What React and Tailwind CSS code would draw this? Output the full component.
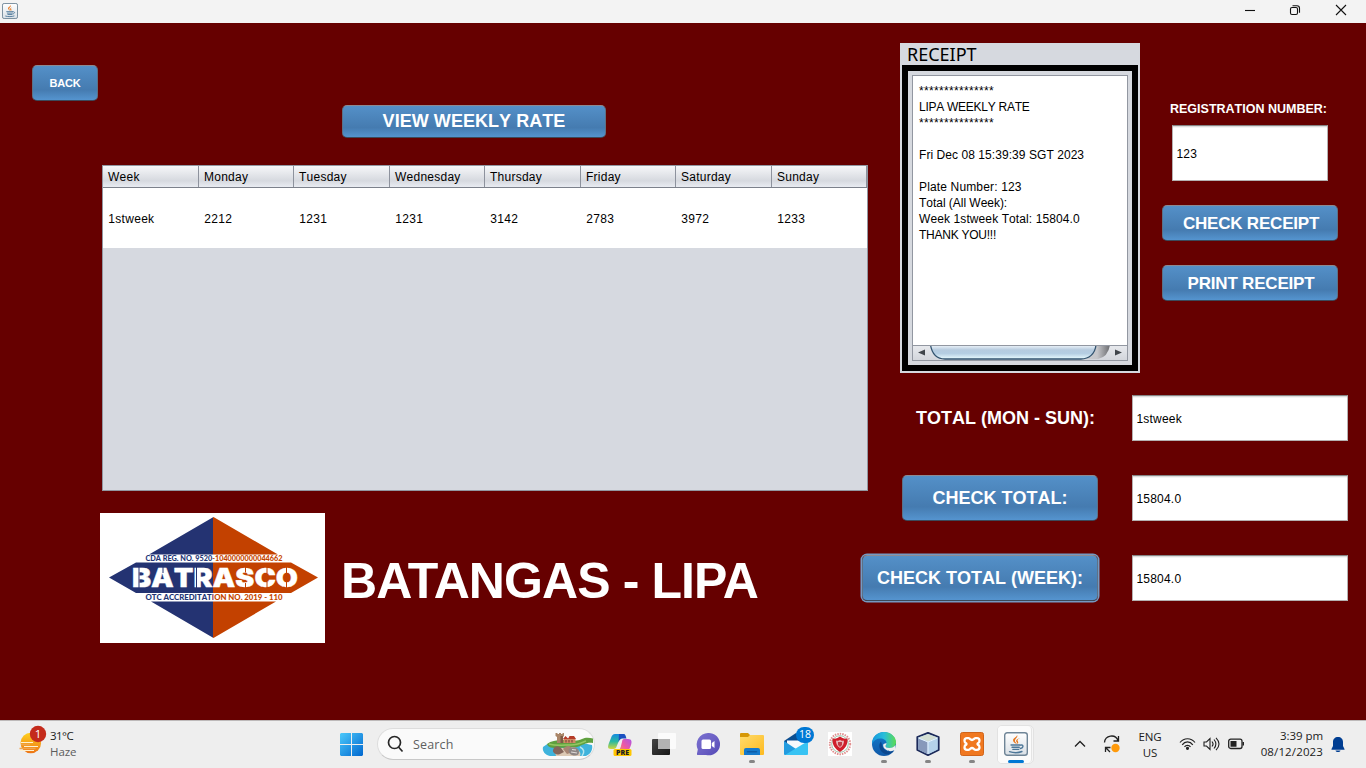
import React from "react";

const days = ["Week", "Monday", "Tuesday", "Wednesday", "Thursday", "Friday", "Saturday", "Sunday"];
const row = ["1stweek", "2212", "1231", "1231", "3142", "2783", "3972", "1233"];
const colWidths = ["w-[96px]", "w-[95px]", "w-[96px]", "w-[95px]", "w-[96px]", "w-[95px]", "w-[96px]", "w-[95px]"];

const receipt = [
  ["***************", "tracking-[0.330px]"],
  ["LIPA WEEKLY RATE", "tracking-[-0.260px]"],
  ["***************", "tracking-[0.330px]"],
  ["", ""],
  ["Fri Dec 08 15:39:39 SGT 2023", "tracking-[0.060px]"],
  ["", ""],
  ["Plate Number: 123", "tracking-[0.150px]"],
  ["Total (All Week):", "tracking-[-0.030px]"],
  ["Week 1stweek Total: 15804.0", "tracking-[0.100px]"],
  ["THANK YOU!!!", "tracking-[-0.250px]"],
];

function JButton({ children, className }) {
  return (
    <button
      className={
        "flex shrink-0 items-center justify-center rounded-[5px] border border-[#5d7186] border-t-[#8c8a92] border-b-[#3b4a5a] bg-linear-to-b from-[#5490c8] via-[#457bb0] via-70% to-[#5594cf] font-bold whitespace-nowrap text-white " +
        className
      }
    >
      {children}
    </button>
  );
}

function Field({ value, className }) {
  return (
    <div
      className={
        "flex shrink-0 items-center border border-[#b5b1b1] border-t-[#858585] bg-white pt-[2px] pl-[3.500px] text-[12px] text-black shadow-[inset_0_1px_0_#dcdcdc,inset_0_2px_0_#f4f4f4] " +
        className
      }
    >
      <span className="tracking-[0.200px]">{value}</span>
    </div>
  );
}

function JavaIcon({ size }) {
  return (
    <svg width={size} height={size} viewBox="0 0 24 24" className="shrink-0">
      <defs>
        <linearGradient id="jv" x1="0" y1="0" x2="0" y2="1">
          <stop offset="0" stopColor="#ffffff" />
          <stop offset="1" stopColor="#d9e0e6" />
        </linearGradient>
      </defs>
      <rect x="0.7" y="0.7" width="22.6" height="22.6" rx="2.5" fill="url(#jv)" stroke="#6f8597" strokeWidth="1.400" />
      <path d="M13 3c1.800 2.800-3.800 4.200-1.600 7 .5.7 1.200 1 1.200 2-2-1-4.300-2.600-3.300-4.700C10.100 5.600 13 4.900 13 3z" fill="#e8761c" />
      <path d="M16 6.200c-1.500.6-3 1.300-2.300 2.800.5.9 1 1.900-.3 3 .3-1.500-1.700-2-1.200-3.500.4-1.400 2.400-2.200 3.800-2.300z" fill="#e8761c" />
      <path d="M7 13h9M8 15.200h7.300M8.800 17.300h6M5.500 19.700c3.500 1.100 9.500 1 12.500-.2M16.300 13.200c3.700-1 3.400 2.800 0 3.300" fill="none" stroke="#4d7798" strokeWidth="1.350" strokeLinecap="round" />
    </svg>
  );
}

function Logo() {
  return (
    <svg width="225" height="130" viewBox="0 0 225 130" className="shrink-0 bg-white">
      <defs>
        <linearGradient id="split" gradientUnits="userSpaceOnUse" x1="0" y1="0" x2="225" y2="0">
          <stop offset="0.5044" stopColor="#243372" />
          <stop offset="0.5044" stopColor="#c34100" />
        </linearGradient>
      </defs>
      <path d="M113.500 4 L49 41.500 H178z M36 49.500 H191 L218 64.500 L191 80 H36 L9 64.500z M51 88.500 H176 L113.500 125z" fill="url(#split)" />
      <g fill="url(#split)" fontFamily="Lato, sans-serif" fontWeight="900">
        <text x="45.500" y="48.400" fontSize="7.300" textLength="137" lengthAdjust="spacingAndGlyphs">CDA REG. NO. 9520-1040000000044662</text>
        <text x="45.500" y="86.700" fontSize="7.300" textLength="137" lengthAdjust="spacingAndGlyphs">OTC ACCREDITATION NO. 2019 - 110</text>
      </g>
      <text x="32" y="74" fill="#fff" stroke="#fff" strokeWidth="0.400" fontFamily="Inter, sans-serif" fontWeight="900" fontSize="26" textLength="166" lengthAdjust="spacingAndGlyphs">BATRASCO</text>
      <g strokeWidth="1">
        <path d="M39 54v22M63 54v6M96.500 54v22" stroke="#243372" />
        <path d="M145.500 54v5.500M145.500 70v6M167 54v6M167 69v7M186.500 54v6M186.500 69v7" stroke="#c34100" />
      </g>
    </svg>
  );
}

function SearchArt() {
  return (
    <svg width="52" height="26" viewBox="0 0 52 26" className="shrink-0">
      <path d="M1 16C6 12 10 11 16 11c12-1 26 1 34 3 1 4-1 9-6 11H8C3 24 0 20 1 16z" fill="#3fb3dc" />
      <path d="M5 13c4-3 9-4 15-4 10 0 14 2 20-1 4-2 8-1 11-.5V12c-7-1-9 2-16 4-8 2-13 0-19 1-5 0-10 0-11-4z" fill="#5fa03f" />
      <path d="M7 13c7 2 15 1 22 1 6 0 10-2 15-4" fill="none" stroke="#94c763" strokeWidth="1.500" />
      <path d="M12 17h12l8-1c4 2 8 6 6 9H14z" fill="#dcc9b4" />
      <path d="M13.500 2h2v1h1.500V2h2v1h1.500V2h1.500v3l-1 1v6h-6V6l-1.500-1z" fill="#a98568" />
      <path d="M18.500 5h2.500v7h-2.500z" fill="#7d5b45" />
      <path d="M21.500 7.500h12V12h-12z" fill="#d08a66" />
      <path d="M21 8l2.500-3 3 3zM26 8l1.500-3H32l2 3z" fill="#b53b28" />
      <path d="M24 9v2.500M27 9v2.500M30 9v2.500" stroke="#703c31" strokeWidth="1" />
      <path d="M11 19c1-4 5-5 8-2l3 4-5 2.500c-4 0-6.500-2-6-4.500z" fill="#84655a" />
      <path d="M21 18c2-3 6-4 8-2l2 5-6 2z" fill="#a78572" />
      <path d="M28 17c4-2 9 0 9 4s-4 4-7 3-5-5-2-7z" fill="#8d8583" />
      <path d="M30 18.500l4 .5M29 21l6 1" stroke="#dedad8" strokeWidth="1.200" />
      <path d="M38 16c4 2 5 5 2 9" fill="none" stroke="#b7e6ef" strokeWidth="1.500" />
    </svg>
  );
}

function TaskSlot({ children, indicator }) {
  return (
    <div className="flex h-[48px] w-[44px] shrink-0 flex-col items-center pt-[11px]">
      {children}
      {indicator && <span className="mt-[4px] h-[3px] w-[6px] rounded-full bg-[#858585]" />}
    </div>
  );
}

function Taskbar() {
  return (
    <footer className="flex h-[48px] w-full shrink-0 border-t border-[#bdb9b9] bg-[#eeeeee] font-['Open_Sans',sans-serif] text-[#1b1b1b]">
      <div className="flex w-[331px] shrink-0 items-start pl-[16px]">
        <svg width="31" height="34" viewBox="0 0 31 34" className="mt-[3px] shrink-0">
          <defs>
            <linearGradient id="sun" x1="0" y1="0" x2="0" y2="1"><stop stopColor="#ffd21d" /><stop offset="1" stopColor="#ed7415" /></linearGradient>
          </defs>
          <circle cx="14.800" cy="19" r="10.300" fill="url(#sun)" />
          <path d="M5 18.500h12M8 22.500h14M4 26.500h14" stroke="#fff0d0" strokeWidth="1.200" />
          <path d="M5 20.500h9M3.500 24.500h16" stroke="#efa552" strokeWidth="1.400" />
          <circle cx="22" cy="10" r="8.200" fill="#c42b1c" />
          <text x="22" y="14" textAnchor="middle" fill="#fff" fontSize="11.500" fontFamily="Open Sans, sans-serif">1</text>
        </svg>
        <div className="ml-[3px] flex flex-col pt-[7px] text-[11.500px] leading-[16px]">
          <span className="tracking-[-0.550px]">31°C</span>
          <span className="tracking-[-0.050px] text-[#5c5c5c]">Haze</span>
        </div>
      </div>
      <div className="flex w-[46px] shrink-0 pt-[12px] pl-[9px]">
        <svg width="23" height="23" viewBox="0 0 23 23">
          <defs><linearGradient id="win" x1="0" y1="0" x2="1" y2="1"><stop stopColor="#4cc9fb" /><stop offset="1" stopColor="#0067cf" /></linearGradient></defs>
          <path d="M1 0h10v11H0V1zM12 0h10l1 1v10H12zM0 12h11v11H1l-1-1zM12 12h11v10l-1 1H12z" fill="url(#win)" />
        </svg>
      </div>
      <div className="mt-[7px] flex h-[32px] w-[218px] shrink-0 items-center rounded-full border border-[#dddddd] border-b-[#c8c8c8] bg-[#fafafa] pl-[9px]">
        <svg width="17" height="18" viewBox="0 0 17 18" fill="none" stroke="#272727" strokeWidth="1.700"><circle cx="7.500" cy="7.500" r="6" /><path d="M11.500 12l4 4.500" /></svg>
        <span className="ml-[9px] pt-[2px] text-[12.500px] tracking-[0.150px] text-[#5f5f5f]">Search</span>
        <span className="ml-auto"><SearchArt /></span>
      </div>
      <div className="ml-[3px] flex">
        <TaskSlot>
          <svg width="26" height="24" viewBox="0 0 26 24" className="shrink-0">
            <defs>
              <linearGradient id="ca" x1="0" y1="0" x2="0" y2="1"><stop stopColor="#168be0" /><stop offset=".5" stopColor="#29b9a2" /><stop offset="1" stopColor="#d3d63a" /></linearGradient>
              <linearGradient id="cb" x1="1" y1="0" x2="0" y2="1"><stop stopColor="#ad55e5" /><stop offset=".5" stopColor="#ed58a4" /><stop offset="1" stopColor="#f79c52" /></linearGradient>
            </defs>
            <path d="M8 2h8c2 0 2 2 3 4h-4c-2 0-3 2-4 5l-2 5c-1 1-3 1-5 1-4 0-3-3-2-6l2-5c1-3 2-4 4-4z" fill="url(#ca)" />
            <path d="M12 2h4.500c2 0 2 2 3 4.500h-4c-2 0-3 1-4 4z" fill="#1c50c0" />
            <path d="M17 7h4c4 0 4 3 3 6l-2 5c-1 2-3 3-5 3h-5c-2 0-1-2 0-3 2-2 2-5 3-8 0-2 1-3 2-3z" fill="url(#cb)" />
            <rect x="6.500" y="17" width="18" height="7" rx="1.500" fill="#ffc700" />
            <text x="9" y="23" fontSize="6.700" fontWeight="800" textLength="13" lengthAdjust="spacingAndGlyphs" fontFamily="Open Sans, sans-serif" fill="#202020">PRE</text>
          </svg>
        </TaskSlot>
        <TaskSlot>
          <svg width="24" height="24" viewBox="0 0 24 24" className="shrink-0">
            <defs><linearGradient id="tv" x1="0" y1="0" x2="1" y2="1"><stop stopColor="#444" /><stop offset="1" stopColor="#171717" /></linearGradient></defs>
            <rect x="0" y="7" width="18" height="16" rx="1" fill="url(#tv)" />
            <rect x="6" y="1" width="18" height="16" rx="1" fill="#fbfbfb" />
            <rect x="6" y="7" width="12" height="10" fill="#b3b3b3" />
          </svg>
        </TaskSlot>
        <TaskSlot>
          <svg width="24" height="24" viewBox="0 0 24 24" className="shrink-0">
            <defs><linearGradient id="ch" x1="0" y1="0" x2="1" y2="1"><stop stopColor="#7970cf" /><stop offset=".5" stopColor="#6c61c5" /><stop offset="1" stopColor="#5348b5" /></linearGradient></defs>
            <path d="M12 1a11.200 11.200 0 1 1-2 22H2c-1 0-1.200-.7-1-1.500l.8-4A11.500 11.500 0 0 1 12 1z" fill="url(#ch)" />
            <rect x="5.500" y="7.500" width="9.500" height="9.500" rx="1.500" fill="#fff" />
            <path d="M15.800 11l2.700-2v7l-2.700-2z" fill="#fff" />
          </svg>
        </TaskSlot>
        <TaskSlot indicator>
          <svg width="24" height="24" viewBox="0 0 24 24" className="shrink-0">
            <defs><linearGradient id="fo" x1="0" y1="0" x2="1" y2="1"><stop stopColor="#ffdb6c" /><stop offset="1" stopColor="#fdba1f" /></linearGradient></defs>
            <path d="M1 1h7l2 2h5v4H0V2q0-1 1-1z" fill="#d69706" />
            <path d="M0 5h8l2-2h13q1 0 1 1v18q0 1-1 1H1q-1 0-1-1z" fill="url(#fo)" />
            <path d="M4 23v-5q0-2 2-2h12q2 0 2 2v5z" fill="#1479cc" />
            <path d="M7.500 19.800h9" stroke="#0c5ca7" strokeWidth="1.500" strokeLinecap="round" />
          </svg>
        </TaskSlot>
        <div className="relative">
          <TaskSlot>
            <svg width="24" height="24" viewBox="0 0 24 24" className="shrink-0">
              <path d="M0 9L12 1l12 8v6H0z" fill="#0c4f91" />
              <path d="M3 8.500h18v8H3z" fill="#f6f9fc" />
              <path d="M0 9l12 8v6H1q-1 0-1-1z" fill="#229bdf" />
              <path d="M24 9L1 23h22q1 0 1-1z" fill="#38c3f3" />
            </svg>
          </TaskSlot>
          <span className="absolute top-[6px] left-[22px] flex h-[16px] w-[18px] items-center justify-center rounded-full bg-[#0078d4] text-[10.500px] text-white">18</span>
        </div>
        <TaskSlot>
          <svg width="24" height="24" viewBox="0 0 24 24" className="shrink-0">
            <path d="M0 0h24v24H0z" fill="#fff" />
            <circle cx="12" cy="12" r="10.200" fill="none" stroke="#e09090" strokeWidth="2" strokeDasharray="1.500 1" />
            <circle cx="12" cy="12" r="8.300" fill="#fff" stroke="#72ad8c" strokeWidth=".7" />
            <path d="M4.500 6.500C8 7 10 6 12 4.500 14 6 16 7 19.500 6.500 20 13 17 17 12 20 7 17 4 13 4.500 6.500z" fill="#d01f2b" />
            <path d="M8 8.500c2 .5 3 0 4-.8 1 .8 2 1.300 4 .8 0 3.500-1 5.500-4 7.500-3-2-4-4-4-7.500z" fill="#e9b4b7" />
            <path d="M10 10h4v3l-2 2-2-2z" fill="#c23a44" />
          </svg>
        </TaskSlot>
        <TaskSlot indicator>
          <svg width="24" height="24" viewBox="0 0 24 24" className="shrink-0">
            <defs>
              <linearGradient id="ea" x1="0" y1="0" x2="1" y2="0"><stop stopColor="#1597dd" /><stop offset=".5" stopColor="#28bddb" /><stop offset="1" stopColor="#5cdc50" /></linearGradient>
              <linearGradient id="eb" x1="0" y1="0" x2="0" y2="1"><stop stopColor="#147ccd" /><stop offset="1" stopColor="#0f58a8" /></linearGradient>
            </defs>
            <circle cx="12" cy="12" r="12" fill="url(#eb)" />
            <path d="M0 12C0 4 6 0 12 0c7 0 12 5 12 10 0 4-3 6-6.500 6-3 0-4-1-4-2 0-.7 1-1 1-3 0-3-3-4.500-6-4.500-4 0-7 2-8.500 5.500z" fill="url(#ea)" />
            <path d="M9 9.500c-3 3-2 10 4 12.500 4 1 7-1 9-3.500-4 2-8 1-10-1.500-2-2-2-5-3-7.500z" fill="#0b478e" />
            <path d="M14.500 11c0 2-1 2.300-1 3 0 1 1 2 4 2 2.500 0 4.500-1 6-3v5l-2 .5c-2 1-5 1-7-.5-3-1.500-4-4-3-6z" fill="#eee" />
          </svg>
        </TaskSlot>
        <TaskSlot indicator>
          <svg width="24" height="24" viewBox="0 0 24 24" className="shrink-0">
            <path d="M12 .8L22.700 5v13L12 23.200 1.300 18V5z" fill="#a9c9e6" stroke="#1b2959" strokeWidth="1.800" strokeLinejoin="round" />
            <path d="M2.500 5.500L12 2l9.500 3.500L12 9.500z" fill="#d3dfd4" />
            <path d="M2.300 6.500L11.500 10v12L2.300 17.500z" fill="#8799bb" />
            <path d="M12.500 10l9-3.500v11l-9 4.500z" fill="#b5d2ea" />
            <path d="M2.500 6l9.500 4 9.500-4M12 10v12" fill="none" stroke="#e6f3ff" strokeWidth="1" />
          </svg>
        </TaskSlot>
        <TaskSlot indicator>
          <svg width="24" height="24" viewBox="0 0 24 24" className="shrink-0">
            <rect x=".5" y=".5" width="23" height="23" rx="2" fill="#f07820" stroke="#d0641a" />
            <path d="M7 6.200h1.500q1.200 0 1.700 1 1.800 1.600 3.600 0 .5-1 1.700-1H17q2.500 0 2.500 2.600 0 2-1.700 2.600-.6.600 0 1.200 1.700.600 1.700 2.600 0 2.600-2.500 2.600h-1.500q-1.200 0-1.700-1-1.800-1.600-3.600 0-.5 1-1.700 1H7q-2.500 0-2.500-2.600 0-2 1.700-2.600.6-.6 0-1.200-1.700-.6-1.700-2.600Q4.500 6.200 7 6.200z" fill="none" stroke="#fff" strokeWidth="2.300" strokeLinejoin="round" />
          </svg>
        </TaskSlot>
        <div className="mt-[4px] ml-[3px] flex h-[39px] w-[37px] shrink-0 rounded-[5px] border border-[#e2e2e2] bg-[#f6f6f6]">
          <div className="flex h-[37px] w-[34px] flex-col items-center rounded-[4px] border-r border-[#e4e4e4] bg-[#fbfbfb] pt-[6px] pl-[3px]">
            <JavaIcon size={24} />
            <span className="mt-[4px] h-[3px] w-[16px] shrink-0 rounded-full bg-[#0078d4]" />
          </div>
        </div>
      </div>
      <div className="ml-[40px] flex flex-1 items-start">
        <svg width="13" height="48" viewBox="0 0 13 48" fill="none" stroke="#202020" strokeWidth="1.300" className="shrink-0"><path d="M1 25.500l5-5 5 5" /></svg>
        <svg width="18" height="18" viewBox="0 0 18 18" fill="none" stroke="#222" strokeWidth="1.300" className="mt-[14px] ml-[16px] shrink-0">
          <path d="M1.500 7.500A7 7 0 0 1 15 5.500M15.500 1v5h-5M2.500 17v-4.500h5M2.800 12.800L7 17" />
          <circle cx="12.500" cy="13" r="4.200" fill="#ff9a0b" stroke="none" />
        </svg>
        <div className="ml-[13px] flex w-[32px] flex-col items-center pt-[8px] text-[11.500px] leading-[16px] tracking-[-0.100px]"><span>ENG</span><span>US</span></div>
        <svg width="17" height="14" viewBox="0 0 17 14" fill="none" stroke="#222" strokeWidth="1.200" className="mt-[16px] ml-[13px] shrink-0">
          <path d="M1 5.500C5 .5 12 .5 16 5.500M3.200 7.800C6 4 11 4 13.800 7.800M5.500 9.800c1.500-2 4.500-2 6 0" /><circle cx="8.500" cy="11.300" r="1" fill="#222" />
        </svg>
        <svg width="17" height="14" viewBox="0 0 17 14" fill="none" stroke="#222" strokeWidth="1.100" className="mt-[16px] ml-[7px] shrink-0">
          <path d="M1 5h2.500L7 1.500v11L3.500 9H1zM9 4.500c1.300 1.500 1.300 3.500 0 5M11 2.500c2.500 3 2.500 6 0 9M13 .8c4 4 4 8.500 0 12.400" />
        </svg>
        <svg width="17" height="12" viewBox="0 0 17 12" className="mt-[17px] ml-[8px] shrink-0"><rect x=".7" y="1.200" width="13.300" height="9.300" rx="2" fill="none" stroke="#222" strokeWidth="1.300" /><path d="M2.500 3h6v5.800h-6zM14.500 4h1.500v3.500h-1.500z" fill="#222" /></svg>
        <div className="ml-[10px] flex w-[68px] flex-col items-end pt-[7px] text-[11.500px] leading-[16px] whitespace-nowrap"><span className="tracking-[-0.050px]">3:39 pm</span><span className="tracking-[0.130px]">08/12/2023</span></div>
        <svg width="14" height="16" viewBox="0 0 14 16" className="mt-[16px] ml-[8px] shrink-0"><path d="M7 0c3 0 5 2 5 5v4l1.500 3v.7H.5V12L2 9V5c0-3 2-5 5-5zM4.500 13.500h5c-.5 2-4.500 2-5 0z" fill="#003e92" /></svg>
      </div>
    </footer>
  );
}

export default function App() {
  return (
    <div className="flex h-[768px] w-[1366px] flex-col overflow-hidden bg-[#660000] font-['Liberation_Sans',Arial,sans-serif] [font-kerning:none]">
      <header className="flex h-[23px] shrink-0 items-start bg-[#f3f3f3] pl-[2px]">
        <div className="pt-[3px]"><JavaIcon size={16} /></div>
        <svg width="106" height="12" viewBox="0 0 106 12" fill="none" stroke="#111" strokeWidth="1.100" className="mt-[4px] mr-[17px] ml-auto">
          <path d="M2 6.500h10" />
          <rect x="47.500" y="3.500" width="7" height="7" rx="1.500" />
          <path d="M49.500 1.700h4.500q2.500 0 2.500 2.500v4.500" />
          <path d="M93 1l10 10M103 1l-10 10" />
        </svg>
      </header>

      <main className="flex min-h-0 flex-1">
        <section className="flex w-[868px] shrink-0 flex-col">
          <div className="flex pt-[42px] pl-[32px]">
            <JButton className="h-[36px] w-[66px] pt-px text-[11px] tracking-[-0.200px]">BACK</JButton>
          </div>
          <div className="mt-[4px] flex pl-[342px]">
            <JButton className="h-[33px] w-[264px] text-[18px] tracking-[0.050px]">VIEW WEEKLY RATE</JButton>
          </div>
          <div className="mt-[27px] ml-[102px] h-[326px] w-[766px] shrink-0 border border-[#9297a1] bg-[#d6d9e0] text-[12px] text-black">
            <div className="flex h-[22px] border-b border-[#7c818b] bg-linear-to-b from-[#f6f7f9] via-[#d6d9df] via-70% to-[#e9ecf2]">
              {days.map((d, i) => (
                <div key={d} className={"flex shrink-0 items-center border-r border-[#8d929d] pl-[5px] tracking-[0.250px] " + colWidths[i]}>{d}</div>
              ))}
            </div>
            <div className="flex h-[60px] bg-white pt-[2px]">
              {row.map((v, i) => (
                <div key={i} className={"flex shrink-0 items-center pl-[5.300px] tracking-[0.300px] " + colWidths[i]}>{v}</div>
              ))}
            </div>
          </div>
          <div className="mt-[22px] ml-[100px] flex items-center">
            <Logo />
            <h1 className="ml-[16px] pt-[6px] text-[50px] leading-none font-bold tracking-[-0.900px] whitespace-nowrap text-white [font-kerning:normal]">BATANGAS - LIPA</h1>
          </div>
        </section>

        <section className="flex flex-1 flex-col">
          <div className="flex pt-[20px]">
            <div className="ml-[32px] flex h-[330px] w-[240px] shrink-0 flex-col bg-[#d6d9df] px-[2px] pb-[2px] text-black">
              <div className="h-[22px] pl-[5px] font-['Noto_Sans',sans-serif] text-[18px] leading-[22px]">
                <span>RECEIPT</span>
              </div>
              <div className="flex h-[306px] flex-col border-[6px] border-black p-[4px]">
                <div className="flex flex-1 flex-col border border-[#9297a1] bg-white">
                  <div className="flex-1 pt-[6.500px] pl-[6px] text-[12px]">
                    {receipt.map(([line, tracking], i) => (
                      <div key={i} className={"h-[16px] leading-[16px] whitespace-pre " + tracking}>{line}</div>
                    ))}
                  </div>
                  <svg width="214" height="15" viewBox="0 0 214 15" className="shrink-0">
                    <defs>
                      <linearGradient id="sb" x1="0" y1="0" x2="0" y2="1"><stop stopColor="#f2f7fb" /><stop offset=".35" stopColor="#b6cbdf" /><stop offset=".6" stopColor="#b4cde2" /><stop offset="1" stopColor="#e9fbff" /></linearGradient>
                      <linearGradient id="st" x1="0" y1="0" x2="0" y2="1"><stop stopColor="#e8eaee" /><stop offset="1" stopColor="#d3d6dc" /></linearGradient>
                      <linearGradient id="ss" x1="0" y1="0" x2="1" y2="0"><stop stopColor="#cfd0d4" /><stop offset=".6" stopColor="#c5c6ca" /><stop offset="1" stopColor="#6b6c70" /></linearGradient>
                    </defs>
                    <rect width="214" height="15" fill="url(#st)" />
                    <path d="M170 0h27q-2 12-12 14h-20z" fill="url(#ss)" />
                    <path d="M17.500 0C19 9 24 14 32 14h136c8 0 14-5 15-14z" fill="url(#sb)" stroke="#32536f" strokeWidth="1.300" />
                    <path d="M0 .5h214" stroke="#9297a1" />
                    <path d="M5 7.500l7-3v6zM209 7.500l-7-3v6z" fill="#40454b" />
                  </svg>
                </div>
              </div>
            </div>
            <div className="flex flex-1 flex-col items-start pt-[59px] pl-[22px]">
              <span className="ml-[8px] text-[12.500px] leading-[15px] font-bold whitespace-nowrap text-white">REGISTRATION NUMBER:</span>
              <Field value="123" className="mt-[8px] ml-[10px] h-[56px] w-[156px]" />
              <JButton className="mt-[24px] h-[36px] w-[176px] pt-px pl-[2px] text-[17px] tracking-[-0.200px]">CHECK RECEIPT</JButton>
              <JButton className="mt-[24px] h-[36px] w-[176px] pt-px pl-[2px] text-[17px] tracking-[-0.200px]">PRINT RECEIPT</JButton>
            </div>
          </div>
          <div className="mt-[22px] flex h-[46px] items-center justify-end pr-[18px]">
            <span className="mr-[37px] text-[18px] font-bold whitespace-nowrap text-white">TOTAL (MON - SUN):</span>
            <Field value="1stweek" className="h-[46px] w-[216px]" />
          </div>
          <div className="mt-[34px] flex h-[46px] items-center justify-end pr-[18px]">
            <JButton className="mr-[34px] h-[46px] w-[196px] text-[18px]">CHECK TOTAL:</JButton>
            <Field value="15804.0" className="h-[46px] w-[216px]" />
          </div>
          <div className="mt-[34px] -ml-[8px] flex h-[46px] items-center justify-end pr-[18px]">
            <JButton className="mr-[34px] h-[46px] w-[236px] text-[18px] ring-[1.500px] ring-[#7499c2]">CHECK TOTAL (WEEK):</JButton>
            <Field value="15804.0" className="h-[46px] w-[216px]" />
          </div>
        </section>
      </main>
      <Taskbar />
    </div>
  );
}
